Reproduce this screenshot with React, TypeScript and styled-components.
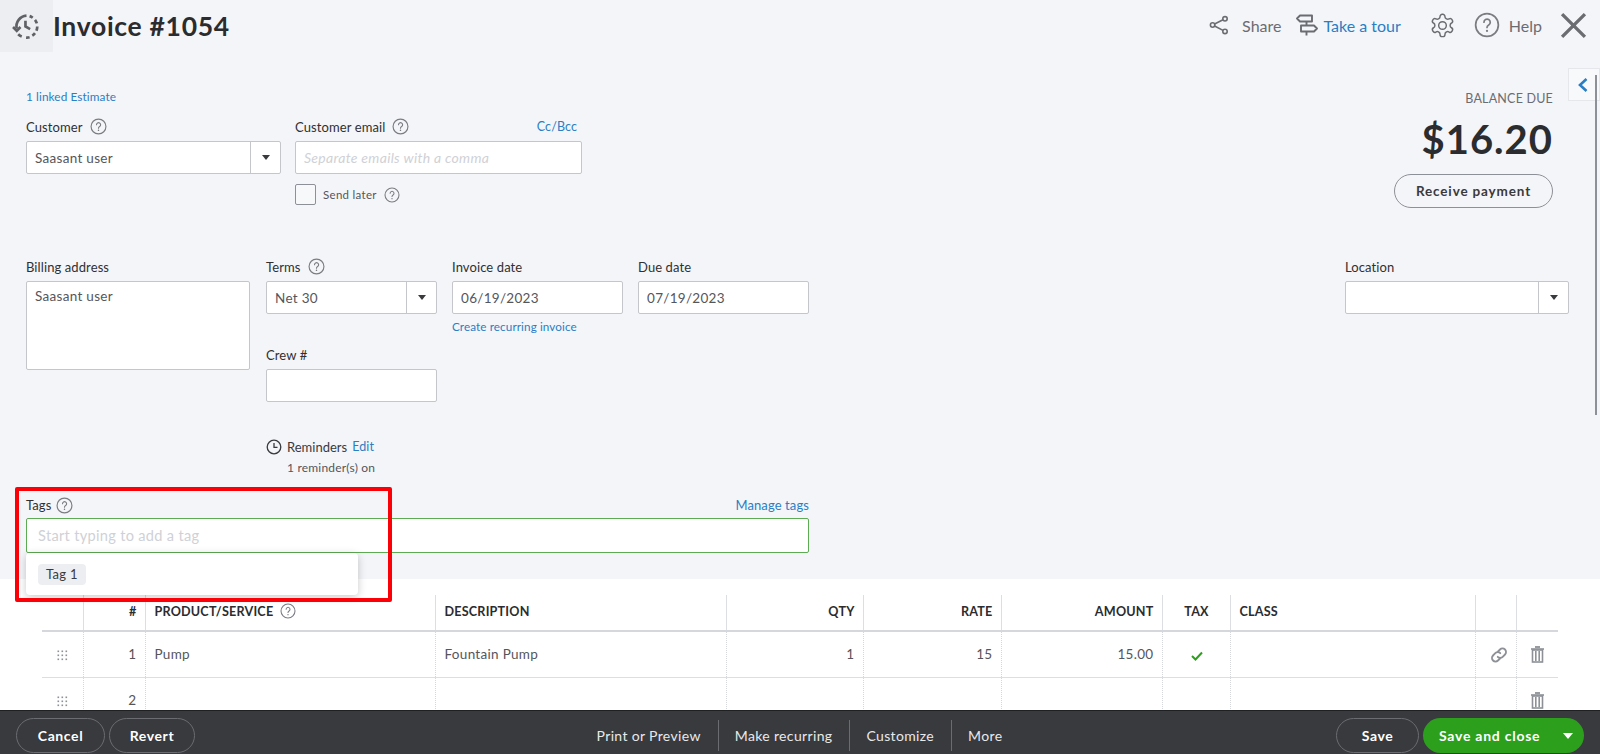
import React from "react";
import styled, { createGlobalStyle } from "styled-components";

const Global = createGlobalStyle`
  html, body { margin: 0; padding: 0; background: #f4f5f8; }
  * { box-sizing: border-box; }
  body { font-family: "Lato", "Open Sans", sans-serif; color: #393a3d; }
`;

const Page = styled.div`
  position: relative;
  width: 1600px;
  height: 754px;
  overflow: hidden;
  display: flex;
  flex-direction: column;
  background: #f4f5f8;
`;
const Header = styled.header`
  height: 52px;
  display: flex;
  align-items: center;
  flex: none;
`;
const HistoryBox = styled.div`
  width: 53px;
  height: 52px;
  background: #eceef1;
  display: flex;
  align-items: center;
  justify-content: center;
  color: #606167;
`;
const Title = styled.h1`
  margin: 0;
  font-size: 26.5px;
  font-weight: 700;
  letter-spacing: 0.7px;
  color: #2b2c2f;
  flex: 1;
`;
const HeaderActions = styled.div`
  display: flex;
  align-items: center;
  color: #6b6c72;
  font-size: 16px;
  padding: 0 13px 2px 0;
`;
const HeaderAction = styled.span<{ $gap?: number; $after?: number; $link?: boolean }>`
  display: inline-flex;
  align-items: center;
  gap: ${(p) => p.$gap ?? 0}px;
  margin-right: ${(p) => p.$after ?? 0}px;
  color: ${(p) => (p.$link ? "#2a7ec4" : "#6b6c72")};
  svg { color: #6b6c72; flex: none; }
`;

const Form = styled.section`
  height: 527px;
  flex: none;
  padding: 35px 31px 0 26px;
  position: relative;
`;
const TopRow = styled.div`
  display: flex;
  justify-content: space-between;
  height: 170px;
`;
const Link = styled.a<{ $size?: number; $inset?: number }>`
  color: #2a7ec4;
  font-size: ${(p) => p.$size ?? 11.7}px;
  text-decoration: none;
  letter-spacing: 0.1px;
  margin-right: ${(p) => p.$inset ?? 0}px;
`;
const LinkedLine = styled.div`
  height: 15px;
  line-height: 15px;
  margin-bottom: 15px;
`;
const FieldRow = styled.div<{ $gap?: number }>`
  display: flex;
  gap: ${(p) => p.$gap ?? 14}px;
`;
const Field = styled.div<{ $w: number }>`
  width: ${(p) => p.$w}px;
  flex: none;
`;
const LabelRow = styled.div`
  height: 19px;
  margin-bottom: 5px;
  display: flex;
  align-items: center;
  justify-content: space-between;
`;
const Label = styled.span`
  font-size: 13px;
  color: #2f3033;
  display: inline-flex;
  align-items: center;
  gap: 7px;
  letter-spacing: 0.1px;
`;
const Input = styled.div<{ $h?: number; $muted?: boolean; $italic?: boolean; $top?: boolean }>`
  height: ${(p) => p.$h ?? 33}px;
  background: #fff;
  border: 1px solid #c4c6cb;
  border-radius: 2px;
  padding: ${(p) => (p.$top ? "6px 8px" : "0 8px")};
  display: flex;
  align-items: ${(p) => (p.$top ? "flex-start" : "center")};
  font-size: ${(p) => (p.$muted ? 14 : 13.5)}px;
  color: ${(p) => (p.$muted ? "#cfd1d6" : "#55565b")};
  font-style: ${(p) => (p.$italic ? "italic" : "normal")};
  letter-spacing: 0.3px;
`;
const SelectBox = styled.div`
  height: 33px;
  background: #fff;
  border: 1px solid #c4c6cb;
  border-radius: 2px;
  display: flex;
  font-size: 13.5px;
  color: #55565b;
  letter-spacing: 0.3px;
`;
const SelectValue = styled.div`
  flex: 1;
  padding-left: 8px;
  display: flex;
  align-items: center;
`;
const Caret = styled.div`
  width: 30px;
  flex: none;
  border-left: 1px solid #c4c6cb;
  display: flex;
  align-items: center;
  justify-content: center;
  &::after {
    content: "";
    border-left: 4px solid transparent;
    border-right: 4px solid transparent;
    border-top: 5px solid #393a3d;
  }
`;
const SendLater = styled.div`
  margin-top: 10px;
  display: flex;
  align-items: center;
  gap: 7px;
  font-size: 11.5px;
  color: #55565b;
  letter-spacing: 0.3px;
`;
const Checkbox = styled.span`
  width: 21px;
  height: 21px;
  border: 1px solid #8d9096;
  border-radius: 2px;
  background: #f7f8fa;
`;
const Balance = styled.div`
  width: 160px;
  margin-right: 16px;
  margin-top: 4px;
  display: flex;
  flex-direction: column;
  align-items: flex-end;
`;
const BalanceLabel = styled.div`
  font-size: 12.5px;
  color: #6b6c72;
  letter-spacing: 0.2px;
  line-height: 16px;
`;
const BalanceAmount = styled.div`
  font-size: 40px;
  font-weight: 700;
  color: #2b2c2f;
  line-height: 44px;
  margin-top: 10px;
  letter-spacing: 1px;
`;
const ReceiveButton = styled.div`
  width: 159px;
  height: 34px;
  margin-top: 13px;
  border: 1px solid #8d9096;
  border-radius: 17px;
  display: flex;
  align-items: center;
  justify-content: center;
  font-size: 13.5px;
  font-weight: 700;
  color: #393a3d;
  letter-spacing: 0.85px;
`;
const MidRow = styled.div`
  display: flex;
  gap: 16px;
  height: 238px;
`;
const MidColumn = styled.div`
  display: flex;
  flex-direction: column;
`;
const Spacer = styled.div`
  flex: 1;
`;
const Subtext = styled.div`
  margin-top: 4px;
  line-height: 14px;
`;
const CrewField = styled.div`
  margin-top: 12px;
`;
const Reminders = styled.div`
  margin-top: 36px;
  font-size: 13px;
  color: #393a3d;
`;
const ReminderHead = styled.div`
  display: flex;
  align-items: center;
  gap: 5px;
  line-height: 18px;
`;
const ReminderSub = styled.div`
  margin: 3px 0 0 21px;
  line-height: 18px;
  font-size: 12px;
  color: #55565b;
  letter-spacing: 0.2px;
`;
const Tags = styled.div`
  width: 783px;
  position: relative;
`;
const TagLabelRow = styled(LabelRow)`
  height: 20px;
  margin-bottom: 3px;
`;
const TagLabel = styled(Label)`
  gap: 5px;
`;
const TagInput = styled(Input)`
  height: 35px;
  border-color: #5dab52;
  padding-left: 11px;
  font-size: 14.6px;
`;
const TagMenu = styled.div`
  position: absolute;
  left: 0;
  top: 58px;
  width: 332px;
  height: 42px;
  background: #fff;
  border-radius: 4px;
  box-shadow: 0 2px 8px rgba(0, 0, 0, 0.22);
  display: flex;
  align-items: center;
  padding-left: 12px;
  z-index: 2;
`;
const TagChip = styled.span`
  height: 21px;
  padding: 0 8px;
  background: #eceef1;
  border-radius: 4px;
  display: inline-flex;
  align-items: center;
  font-size: 13px;
  color: #393a3d;
  letter-spacing: 0.3px;
`;
const Annotation = styled.div`
  position: absolute;
  left: 15px;
  top: 487px;
  width: 377px;
  height: 115px;
  border: 4px solid #fb0007;
  border-radius: 2px;
  z-index: 3;
  pointer-events: none;
`;
const SideTab = styled.div`
  position: absolute;
  left: 1568px;
  top: 68px;
  width: 32px;
  height: 33px;
  background: #f8f9fb;
  border: 1px solid #e6e7ea;
  display: flex;
  align-items: center;
  padding-left: 8px;
  color: #2a7ec4;
`;
const ScrollLine = styled.div`
  position: absolute;
  left: 1595px;
  top: 75px;
  width: 2px;
  height: 340px;
  background: #8d9096;
`;

const TableArea = styled.section`
  flex: 1;
  min-height: 0;
  overflow: hidden;
  background: #fff;
  padding: 16px 42px 0;
`;
const Table = styled.table`
  width: 1516px;
  table-layout: fixed;
  border-collapse: collapse;
`;
const Th = styled.th<{ $right?: boolean; $center?: boolean; $w: number }>`
  width: ${(p) => p.$w}px;
  height: 36px;
  padding: 0 8px 3px 9px;
  font-size: 12.6px;
  font-weight: 700;
  color: #2b2c2f;
  letter-spacing: 0.2px;
  text-align: ${(p) => (p.$right ? "right" : p.$center ? "center" : "left")};
  border-left: 1px solid #dcdee2;
  border-bottom: 2px solid #d4d7dc;
  &:first-child { border-left: none; }
  svg { vertical-align: -3px; margin-left: 7px; }
`;
const Td = styled.td<{ $right?: boolean; $center?: boolean; $nudge?: number }>`
  height: 46px;
  padding: 0 8px 0 ${(p) => p.$nudge ?? 9}px;
  font-size: 13.5px;
  color: #55565b;
  letter-spacing: 0.3px;
  text-align: ${(p) => (p.$right ? "right" : p.$center ? "center" : "left")};
  border-left: 1px dotted #d4d7dc;
  border-bottom: 1px solid #dcdee2;
  &:first-child { border-left: none; }
  svg { display: inline-block; vertical-align: middle; }
`;

const Footer = styled.footer`
  height: 44px;
  flex: none;
  background: #393a3d;
  border-top: 1px solid #1f2022;
  display: grid;
  grid-template-columns: 1fr auto 1fr;
  align-items: start;
  padding: 7px 16px 0;
  color: #fff;
`;
const FooterGroup = styled.div<{ $end?: boolean }>`
  display: flex;
  gap: 4px;
  justify-content: ${(p) => (p.$end ? "flex-end" : "flex-start")};
`;
const PillButton = styled.div<{ $w: number }>`
  width: ${(p) => p.$w}px;
  height: 35px;
  border: 1px solid #6b6c72;
  border-radius: 18px;
  display: flex;
  align-items: center;
  justify-content: center;
  font-size: 14px;
  font-weight: 700;
  letter-spacing: 0.6px;
`;
const GreenButton = styled.div`
  width: 161px;
  height: 35px;
  background: #2ca01c;
  border-radius: 18px;
  display: flex;
  align-items: center;
  justify-content: space-between;
  padding: 0 11px 0 16px;
  font-size: 14px;
  font-weight: 700;
  letter-spacing: 0.75px;
  &::after {
    content: "";
    border-left: 5px solid transparent;
    border-right: 5px solid transparent;
    border-top: 6px solid #fff;
  }
`;
const FooterCenter = styled.div`
  display: flex;
  align-items: center;
  height: 35px;
  font-size: 14px;
  color: #e8e9eb;
  letter-spacing: 0.35px;
`;
const FooterLink = styled.span<{ $divider?: boolean }>`
  padding: 0 17px 0 16px;
  line-height: 31px;
  border-left: ${(p) => (p.$divider ? "1px solid #6b6c72" : "none")};
`;

const Help = ({ size = 17 }: { size?: number }) => (
  <svg width={size} height={size} viewBox="0 0 24 24" fill="none" stroke="#7a7c82" strokeWidth="1.6" strokeLinecap="round">
    <circle cx="12" cy="12" r="10.5" />
    <path d="M9.2 9.4a2.9 2.9 0 1 1 4.4 2.5c-1 .6-1.6 1.2-1.6 2.4" />
    <path d="M12 17.4v.1" strokeWidth="2" />
  </svg>
);
const HistoryIcon = () => (
  <svg width="29" height="29" viewBox="0 0 28 28" fill="none" stroke="currentColor" strokeWidth="2.6">
    <path d="M4.5 16A10.5 10.5 0 0 1 14 3.5" />
    <path d="M17 4a10.5 10.5 0 0 1 3 1.6M22.2 7.6a10.5 10.5 0 0 1 1.8 3.4M24.4 14a10.5 10.5 0 0 1-.8 4M22.2 20.4a10.5 10.5 0 0 1-2.6 2.4M17 24.4a10.5 10.5 0 0 1-3.4.3" />
    <path d="M13 8.5V14l4.5 2.5" />
    <path d="M1 14.5l3.6 3.6 3.6-3.6" />
    <path d="M6 21.5a10 10 0 0 0 3.4 2.2" />
  </svg>
);
const ShareIcon = () => (
  <svg width="20" height="20" viewBox="0 0 20 20" fill="none" stroke="currentColor" strokeWidth="1.6">
    <circle cx="16" cy="3.8" r="2.2" />
    <circle cx="16" cy="16.4" r="2.2" />
    <circle cx="3.6" cy="10" r="2.2" />
    <path d="M5.6 9l8.4-4.2M5.6 11l8.4 4.4" />
  </svg>
);
const TourIcon = () => (
  <svg width="24" height="24" viewBox="0 0 24 24" fill="none" stroke="currentColor" strokeWidth="1.9" strokeLinejoin="round">
    <path d="M5 2.5h12v6H5L2 5.500z" />
    <path d="M6 12.500h13l3 3-3 3H6z" />
    <path d="M11.500 8.500v4M11.500 18.500v4" />
  </svg>
);
const GearIcon = () => (
  <svg width="27" height="27" viewBox="0 0 24 24" fill="none" stroke="currentColor" strokeWidth="1.3" strokeLinejoin="round">
    <path d="M12.2 2h-.4a2 2 0 0 0-2 2v.2a2 2 0 0 1-1 1.7l-.4.3a2 2 0 0 1-2 0l-.2-.1a2 2 0 0 0-2.7.7l-.2.4a2 2 0 0 0 .7 2.7l.2.1a2 2 0 0 1 1 1.7v.5a2 2 0 0 1-1 1.7l-.2.1a2 2 0 0 0-.7 2.7l.2.4a2 2 0 0 0 2.7.7l.2-.1a2 2 0 0 1 2 0l.4.3a2 2 0 0 1 1 1.7v.2a2 2 0 0 0 2 2h.4a2 2 0 0 0 2-2v-.2a2 2 0 0 1 1-1.7l.4-.3a2 2 0 0 1 2 0l.2.1a2 2 0 0 0 2.7-.7l.2-.4a2 2 0 0 0-.7-2.7l-.2-.1a2 2 0 0 1-1-1.7v-.5a2 2 0 0 1 1-1.7l.2-.1a2 2 0 0 0 .7-2.7l-.2-.4a2 2 0 0 0-2.7-.7l-.2.1a2 2 0 0 1-2 0l-.4-.3a2 2 0 0 1-1-1.7V4a2 2 0 0 0-2-2z" />
    <circle cx="12" cy="12" r="3.4" />
  </svg>
);
const CloseIcon = () => (
  <svg width="27" height="27" viewBox="0 0 26 26" fill="none" stroke="currentColor" strokeWidth="3.2">
    <path d="M2 2l22 22M24 2L2 24" />
  </svg>
);
const ClockIcon = () => (
  <svg width="16" height="16" viewBox="0 0 16 16" fill="none" stroke="#393a3d" strokeWidth="1.3">
    <circle cx="8" cy="8" r="6.8" />
    <path d="M8 4v4.3h3.5" />
  </svg>
);
const ChevronLeft = () => (
  <svg width="12" height="16" viewBox="0 0 12 16" fill="none" stroke="currentColor" strokeWidth="2.6">
    <path d="M9.5 2L3 8l6.5 6" />
  </svg>
);
const Grip = () => (
  <svg width="11" height="11" viewBox="0 0 11 11" fill="#8d9096">
    {[0.5, 4.5, 8.5].flatMap((y) =>
      [0.5, 4.5, 8.5].map((x) => <rect key={`${x}-${y}`} x={x} y={y} width="1.6" height="1.6" />)
    )}
  </svg>
);
const TaxCheck = () => (
  <svg width="12" height="10" viewBox="0 0 12 10" fill="none" stroke="#2ca01c" strokeWidth="2">
    <path d="M1 5l3.5 3.5L11 1.5" />
  </svg>
);
const ChainIcon = () => (
  <svg width="18" height="18" viewBox="0 0 18 18" fill="none" stroke="#8d9096" strokeWidth="1.8" strokeLinecap="round">
    <path d="M8 5.5l2-2a3.5 3.5 0 0 1 5 5l-2.3 2.3a3.5 3.5 0 0 1-5 0" />
    <path d="M10 12.5l-2 2a3.5 3.5 0 0 1-5-5l2.3-2.3a3.5 3.5 0 0 1 5 0" />
  </svg>
);
const TrashIcon = () => (
  <svg width="13" height="17" viewBox="0 0 13 17" fill="none" stroke="#8d9096" strokeWidth="1.6">
    <path d="M0 3h13" />
    <path d="M4 1h5" strokeWidth="1.8" />
    <rect x="1.5" y="4" width="10" height="12" />
    <path d="M4.8 5v10M8.2 5v10" />
  </svg>
);

const columns: { label: string; w: number; right?: boolean; center?: boolean; help?: boolean }[] = [
  { label: "", w: 41 },
  { label: "#", w: 62, right: true },
  { label: "PRODUCT/SERVICE", w: 290, help: true },
  { label: "DESCRIPTION", w: 291 },
  { label: "QTY", w: 137, right: true },
  { label: "RATE", w: 138, right: true },
  { label: "AMOUNT", w: 161, right: true },
  { label: "TAX", w: 68, center: true },
  { label: "CLASS", w: 245 },
  { label: "", w: 41 },
  { label: "", w: 42 },
];

const Select = ({ value }: { value?: string }) => (
  <SelectBox>
    <SelectValue>{value}</SelectValue>
    <Caret />
  </SelectBox>
);

export default function App() {
  return (
    <Page>
      <Global />
      <Header>
        <HistoryBox>
          <HistoryIcon />
        </HistoryBox>
        <Title>Invoice #1054</Title>
        <HeaderActions>
          <HeaderAction $gap={13} $after={14}>
            <ShareIcon />
            Share
          </HeaderAction>
          <HeaderAction $gap={4} $link $after={28}>
            <TourIcon />
            Take a tour
          </HeaderAction>
          <HeaderAction $after={18}>
            <GearIcon />
          </HeaderAction>
          <HeaderAction $gap={9} $after={18}>
            <Help size={26} />
            Help
          </HeaderAction>
          <HeaderAction>
            <CloseIcon />
          </HeaderAction>
        </HeaderActions>
      </Header>
      <Form>
        <TopRow>
          <div>
            <LinkedLine>
              <Link $size={11.8}>1 linked Estimate</Link>
            </LinkedLine>
            <FieldRow>
              <Field $w={255}>
                <LabelRow>
                  <Label>
                    Customer <Help />
                  </Label>
                </LabelRow>
                <Select value="Saasant user" />
              </Field>
              <Field $w={287}>
                <LabelRow>
                  <Label>
                    Customer email <Help />
                  </Label>
                  <Link $size={12.5} $inset={5}>
                    Cc/Bcc
                  </Link>
                </LabelRow>
                <Input $muted $italic>
                  Separate emails with a comma
                </Input>
                <SendLater>
                  <Checkbox />
                  Send later <Help size={16} />
                </SendLater>
              </Field>
            </FieldRow>
          </div>
          <Balance>
            <BalanceLabel>BALANCE DUE</BalanceLabel>
            <BalanceAmount>$16.20</BalanceAmount>
            <ReceiveButton>Receive payment</ReceiveButton>
          </Balance>
        </TopRow>
        <MidRow>
          <Field $w={224}>
            <LabelRow>
              <Label>Billing address</Label>
            </LabelRow>
            <Input $h={89} $top>
              Saasant user
            </Input>
          </Field>
          <MidColumn>
            <FieldRow $gap={15}>
              <Field $w={171}>
                <LabelRow>
                  <Label>
                    Terms <Help />
                  </Label>
                </LabelRow>
                <Select value="Net 30" />
              </Field>
              <Field $w={171}>
                <LabelRow>
                  <Label>Invoice date</Label>
                </LabelRow>
                <Input>06/19/2023</Input>
                <Subtext>
                  <Link>Create recurring invoice</Link>
                </Subtext>
              </Field>
              <Field $w={171}>
                <LabelRow>
                  <Label>Due date</Label>
                </LabelRow>
                <Input>07/19/2023</Input>
              </Field>
            </FieldRow>
            <CrewField>
              <Field $w={171}>
                <LabelRow>
                  <Label>Crew #</Label>
                </LabelRow>
                <Input />
              </Field>
            </CrewField>
            <Reminders>
              <ReminderHead>
                <ClockIcon />
                Reminders <Link $size={12.5}>Edit</Link>
              </ReminderHead>
              <ReminderSub>1 reminder(s) on</ReminderSub>
            </Reminders>
          </MidColumn>
          <Spacer />
          <Field $w={224}>
            <LabelRow>
              <Label>Location</Label>
            </LabelRow>
            <Select />
          </Field>
        </MidRow>
        <Tags>
          <TagLabelRow>
            <TagLabel>
              Tags <Help />
            </TagLabel>
            <Link $size={13}>Manage tags</Link>
          </TagLabelRow>
          <TagInput $muted>Start typing to add a tag</TagInput>
          <TagMenu>
            <TagChip>Tag 1</TagChip>
          </TagMenu>
        </Tags>
      </Form>
      <TableArea>
        <Table>
          <thead>
            <tr>
              {columns.map((c, i) => (
                <Th key={i} $w={c.w} $right={c.right} $center={c.center}>
                  {c.label}
                  {c.help && <Help size={16} />}
                </Th>
              ))}
            </tr>
          </thead>
          <tbody>
            <tr>
              <Td $center>
                <Grip />
              </Td>
              <Td $right>1</Td>
              <Td>Pump</Td>
              <Td>Fountain Pump</Td>
              <Td $right>1</Td>
              <Td $right>15</Td>
              <Td $right>15.00</Td>
              <Td $center>
                <TaxCheck />
              </Td>
              <Td />
              <Td $center $nudge={14}>
                <ChainIcon />
              </Td>
              <Td $center>
                <TrashIcon />
              </Td>
            </tr>
            <tr>
              <Td $center>
                <Grip />
              </Td>
              <Td $right>2</Td>
              <Td />
              <Td />
              <Td />
              <Td />
              <Td />
              <Td />
              <Td />
              <Td />
              <Td $center>
                <TrashIcon />
              </Td>
            </tr>
          </tbody>
        </Table>
      </TableArea>
      <Footer>
        <FooterGroup>
          <PillButton $w={89}>Cancel</PillButton>
          <PillButton $w={86}>Revert</PillButton>
        </FooterGroup>
        <FooterCenter>
          <FooterLink>Print or Preview</FooterLink>
          <FooterLink $divider>Make recurring</FooterLink>
          <FooterLink $divider>Customize</FooterLink>
          <FooterLink $divider>More</FooterLink>
        </FooterCenter>
        <FooterGroup $end>
          <PillButton $w={83}>Save</PillButton>
          <GreenButton>Save and close</GreenButton>
        </FooterGroup>
      </Footer>
      <SideTab>
        <ChevronLeft />
      </SideTab>
      <ScrollLine />
      <Annotation />
    </Page>
  );
}
